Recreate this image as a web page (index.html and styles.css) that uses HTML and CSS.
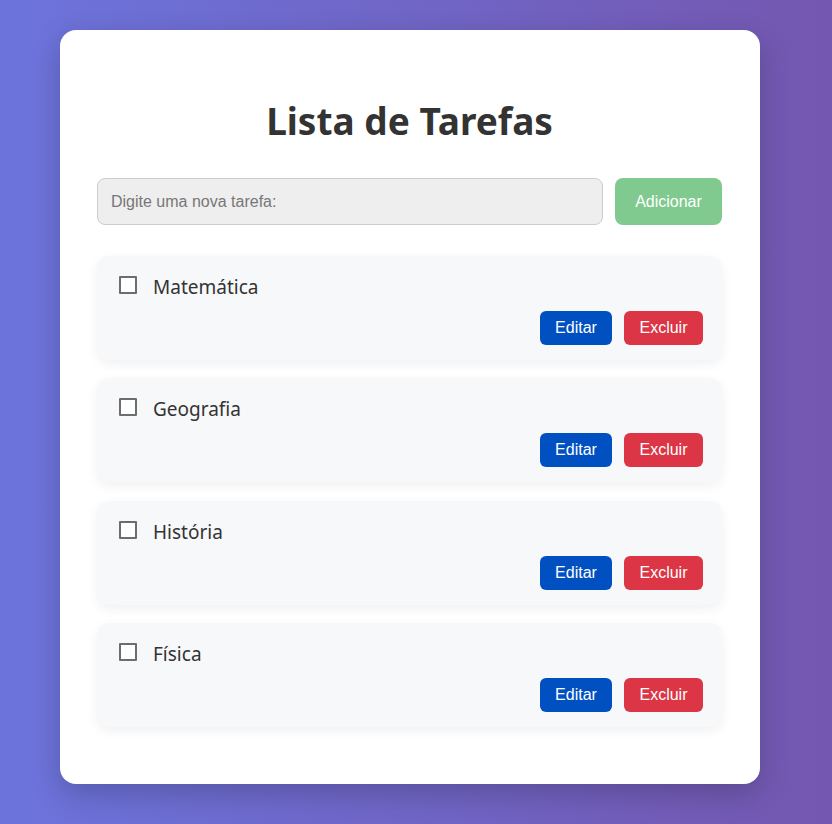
FILE: index.html
```html
<!DOCTYPE html>
<html lang="pt-BR">
<head>
<meta charset="utf-8">
<title>Lista de Tarefas</title>
<link rel="stylesheet" href="styles.css">
</head>
<body>
<main class="container">
  <h1 class="title">Lista de Tarefas</h1>
  <form class="add-form">
    <input class="add-input" type="text" placeholder="Digite uma nova tarefa:">
    <button class="add-btn" type="button">Adicionar</button>
  </form>
  <ul class="tasks">
    <li class="task">
      <label class="task-row"><input class="check" type="checkbox"><span class="task-text">Matemática</span></label>
      <div class="actions"><button class="btn btn-edit" type="button">Editar</button><button class="btn btn-del" type="button">Excluir</button></div>
    </li>
    <li class="task">
      <label class="task-row"><input class="check" type="checkbox"><span class="task-text">Geografia</span></label>
      <div class="actions"><button class="btn btn-edit" type="button">Editar</button><button class="btn btn-del" type="button">Excluir</button></div>
    </li>
    <li class="task">
      <label class="task-row"><input class="check" type="checkbox"><span class="task-text">História</span></label>
      <div class="actions"><button class="btn btn-edit" type="button">Editar</button><button class="btn btn-del" type="button">Excluir</button></div>
    </li>
    <li class="task">
      <label class="task-row"><input class="check" type="checkbox"><span class="task-text">Física</span></label>
      <div class="actions"><button class="btn btn-edit" type="button">Editar</button><button class="btn btn-del" type="button">Excluir</button></div>
    </li>
  </ul>
</main>
</body>
</html>
```
FILE: styles.css
```css
* { box-sizing: border-box; }
html, body { height: 100%; }
body {
  margin: 0;
  background: linear-gradient(to right, #6c74dc 0%, #7457b0 100%);
  font-family: "Segoe UI", "Noto Sans", sans-serif;
  color: #333;
  padding-top: 30px;
}
.container {
  width: 700px;
  margin: 0 auto;
  transform: translateX(-6px);
  background: #fff;
  border-radius: 16px;
  padding: 44px 38px 57px 37px;
  box-shadow: 0 10px 30px rgba(0,0,0,0.2);
}
.title {
  margin: 22px 0 32px;
  text-align: center;
  font-size: 37px;
  line-height: 50px;
  font-weight: 700;
  color: #333;
}
.add-form {
  display: flex;
  gap: 12px;
  margin-bottom: 31px;
}
.add-input {
  flex: 1;
  height: 47px;
  padding: 0 13px;
  border: 1px solid #ccc;
  border-radius: 8px;
  background: #eee;
  font-family: "Liberation Sans", Arial, sans-serif;
  font-size: 16px;
  color: #333;
}
.add-input::placeholder { color: #777; }
.add-btn {
  width: 107px;
  height: 47px;
  border: none;
  border-radius: 8px;
  background: #80ca8f;
  color: #fff;
  font-family: "Liberation Sans", Arial, sans-serif;
  font-size: 16px;
}
.tasks {
  list-style: none;
  margin: 0;
  padding: 0;
  display: flex;
  flex-direction: column;
  gap: 18.4px;
}
.task {
  background: #f7f8fa;
  border-radius: 12px;
  padding: 20px 19px 15px 22px;
  height: 104px;
  box-shadow: 0 4px 12px rgba(0,0,0,0.06);
}
.task-row {
  display: flex;
  align-items: center;
  gap: 16px;
  height: 18px;
  margin-bottom: 17px;
}
.check {
  appearance: none;
  -webkit-appearance: none;
  margin: 0;
  width: 18px;
  height: 18px;
  border: 2px solid #6d6d6d;
  border-radius: 1px;
  background: #fff;
}
.task-text {
  font-size: 19px;
  line-height: 24px;
  color: #333;
  position: relative;
  top: 2px;
}
.actions {
  display: flex;
  justify-content: flex-end;
  gap: 12px;
}
.btn {
  height: 34px;
  border: none;
  border-radius: 6px;
  color: #fff;
  font-family: "Liberation Sans", Arial, sans-serif;
  font-size: 16px;
  padding: 0 14px;
}
.btn-edit { background: #0050c2; width: 72px; }
.btn-del { background: #dc3545; width: 79px; }
```
